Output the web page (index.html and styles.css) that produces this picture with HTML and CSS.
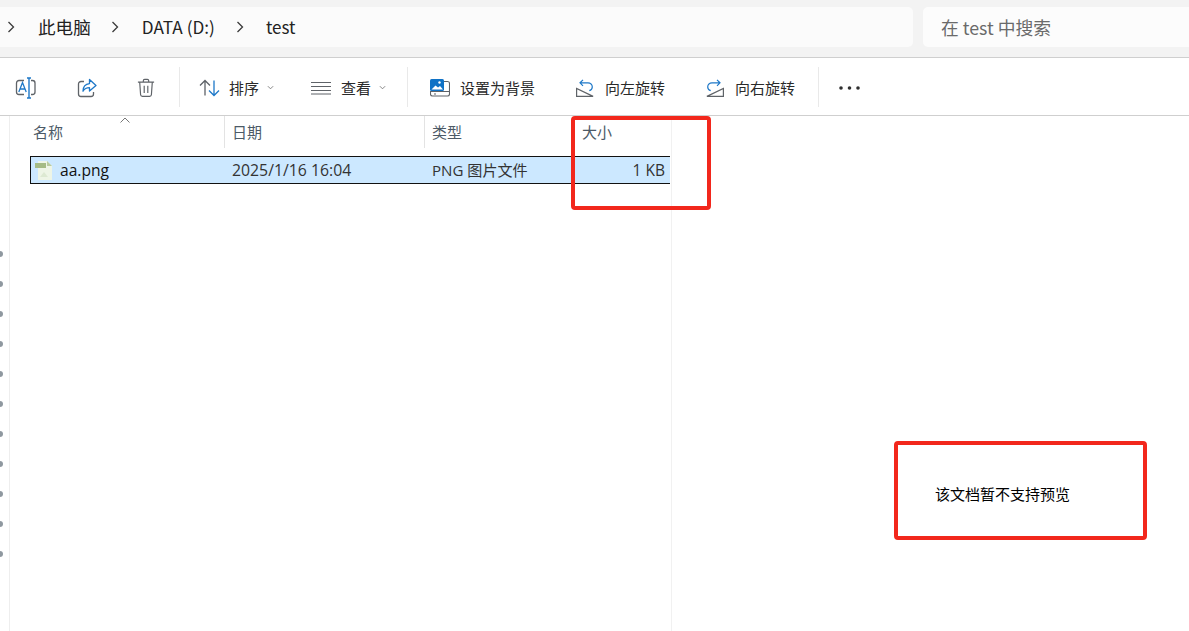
FILE: index.html
```html
<!DOCTYPE html>
<html lang="zh-CN">
<head>
<meta charset="utf-8">
<title>test</title>
<link rel="stylesheet" href="styles.css">
</head>
<body>
<div class="app">
  <header class="topbar">
    <nav class="address">
      <svg class="chev first" viewBox="0 0 8 12"><path d="M1.5 1l5 5-5 5"/></svg>
      <span class="crumb c1">此电脑</span>
      <svg class="chev" viewBox="0 0 8 12"><path d="M1.5 1l5 5-5 5"/></svg>
      <span class="crumb c2">DATA (D:)</span>
      <svg class="chev" viewBox="0 0 8 12"><path d="M1.5 1l5 5-5 5"/></svg>
      <span class="crumb c3">test</span>
    </nav>
    <div class="search">在 test 中搜索</div>
  </header>

  <div class="toolbar">
    <button class="tool icon-only i1">
      <svg width="22" height="22" viewBox="0 0 22 22" fill="none"><path d="M9 3.500H4a2.500 2.500 0 0 0-2.500 2.500v9A2.500 2.500 0 0 0 4 17.500h5M16 3.500h1.500A2.500 2.500 0 0 1 20 6v9a2.500 2.500 0 0 1-2.500 2.500H16" stroke="#5f6368" stroke-width="1.300"/><path d="M3.800 15L7.500 5.500l3.700 9.500M5 12h5" stroke="#1e78c8" stroke-width="1.300"/><path d="M12 1h4M14 1v20M12 21h4" stroke="#1e78c8" stroke-width="1.400"/></svg>
    </button>
    <button class="tool icon-only i2">
      <svg width="22" height="22" viewBox="0 0 22 22" fill="none"><path d="M8 4.500H5A2.500 2.500 0 0 0 2.500 7v10A2.500 2.500 0 0 0 5 19.500h10a2.500 2.500 0 0 0 2.500-2.500v-2" stroke="#5f6368" stroke-width="1.300"/><path d="M13.500 2.500l6.500 6-6.500 5.500v-3.300c-3 0-5 1-6.500 3.600 0-4.500 2.500-7.300 6.500-7.700z" stroke="#1e78c8" stroke-width="1.300" stroke-linejoin="round"/></svg>
    </button>
    <button class="tool icon-only i3">
      <svg width="18" height="22" viewBox="0 0 20 22" fill="none" stroke="#5f6368" stroke-width="1.300"><path d="M1 4.500h18M7 4.500V3a1.500 1.500 0 0 1 1.500-1.500h3A1.500 1.500 0 0 1 13 3v1.500M3 4.500l1 14a2 2 0 0 0 2 1.800h8a2 2 0 0 0 2-1.800l1-14M8 8.500v8M12 8.500v8"/></svg>
    </button>
    <span class="sep s1"></span>
    <button class="tool t-sort">
      <svg width="21" height="18" viewBox="0 0 21 18" fill="none" stroke-width="1.300"><path d="M1 6.500L6 1.500l5 5M6 1.500v15" stroke="#5f6368"/><path d="M10 11.500l5 5 5-5M15 16.500v-15" stroke="#1e78c8"/></svg>
      <span class="label">排序</span>
      <svg class="caret c-a" viewBox="0 0 8 5"><path d="M1 1l3 3 3-3"/></svg>
    </button>
    <button class="tool t-view">
      <svg width="20" height="14" viewBox="0 0 20 14" fill="none" stroke="#5f6368" stroke-width="1.200"><path d="M0 1.500h20M0 5.500h20M0 9.500h20M0 13h20"/></svg>
      <span class="label">查看</span>
      <svg class="caret c-b" viewBox="0 0 8 5"><path d="M1 1l3 3 3-3"/></svg>
    </button>
    <span class="sep s2"></span>
    <button class="tool t-bg">
      <svg width="20" height="18" viewBox="0 0 20 18" fill="none"><path d="M14 2.500h3.500a2 2 0 0 1 2 2V15a2 2 0 0 1-2 2h-15a2 2 0 0 1-2-2v-3" stroke="#5f6368" stroke-width="1.100"/><path d="M1 12.500h18.500M4 15h2" stroke="#5f6368" stroke-width="1.100"/><rect x="0" y="0" width="14" height="12" rx="1.500" fill="#0f72c6"/><path d="M1.500 10.500l4-4 2.500 2 2-1.500 3 3.500z" fill="#fff"/><circle cx="9.500" cy="3.500" r="1.200" fill="#fff"/></svg>
      <span class="label">设置为背景</span>
    </button>
    <button class="tool t-left">
      <svg width="18" height="18" viewBox="0 0 18 18" fill="none"><path d="M.6 17.400V9.500l16.500 7.900z" stroke="#5f6368" stroke-width="1.200"/><path d="M7 .8L4 3.800l3 3M4 3.800h8a4.300 4.300 0 0 1 4.300 4.200 4 4 0 0 1-3 3.700" stroke="#1e78c8" stroke-width="1.200"/></svg>
      <span class="label">向左旋转</span>
    </button>
    <button class="tool t-right">
      <svg width="18" height="18" viewBox="0 0 18 18" fill="none"><path d="M17.400 17.400V9.500L.9 17.400z" stroke="#5f6368" stroke-width="1.200"/><path d="M11 .8l3 3-3 3M14 3.800H6A4.300 4.300 0 0 0 1.700 8a4 4 0 0 0 3 3.700" stroke="#1e78c8" stroke-width="1.200"/></svg>
      <span class="label">向右旋转</span>
    </button>
    <span class="sep s3"></span>
    <button class="tool t-more">
      <svg width="21" height="4" viewBox="0 0 21 4" fill="#2f2f2f"><circle cx="2" cy="2" r="1.800"/><circle cx="10.500" cy="2" r="1.800"/><circle cx="19" cy="2" r="1.800"/></svg>
    </button>
  </div>

  <main class="body">
    <aside class="nav"></aside>
    <section class="list">
      <div class="cols">
        <div class="col h-name">名称</div>
        <div class="col h-date">日期</div>
        <div class="col h-type">类型</div>
        <div class="col h-size">大小</div>
        <svg class="sort" viewBox="0 0 10 6"><path d="M.5 5.500L5 1l4.500 4.500"/></svg>
      </div>
      <div class="row">
        <div class="cell f-name">
          <svg class="file" width="17" height="19" viewBox="0 0 17 19"><path d="M3 0h9l5 5v14H3z" fill="#eef5e6"/><path d="M12 0l5 5h-5z" fill="#b9cba0"/><rect x="0" y="2" width="11" height="5" fill="#a5bb85"/><path d="M5 16l4-5 4 5z" fill="#dde9d2"/></svg>
          <span>aa.png</span>
        </div>
        <div class="cell f-date">2025/1/16 16:04</div>
        <div class="cell f-type">PNG 图片文件</div>
        <div class="cell f-size">1 KB</div>
      </div>
    </section>
    <aside class="preview">
      <p class="msg">该文档暂不支持预览</p>
    </aside>
  </main>

  <div class="dots">
    <i></i><i></i><i></i><i></i><i></i><i></i><i></i><i></i><i></i><i></i><i></i>
  </div>
  <div class="mark m1"></div>
  <div class="mark m2"></div>
</div>
</body>
</html>
```

FILE: styles.css
```css
* { box-sizing: border-box; }
html, body { margin: 0; padding: 0; height: 100%; background: #fff; overflow: hidden; }
body { font-family: "Noto Sans CJK SC", "Open Sans", "Noto Sans", sans-serif; color: #1f1f1f; }
.app { position: relative; width: 1189px; height: 631px; display: flex; flex-direction: column; }

.topbar { height: 58px; flex: none; background: #f3f3f3; border-bottom: 1px solid #cfcfcf; padding: 7px 0 10px; display: flex; gap: 10px; }
.address { width: 913px; height: 40px; background: #fbfbfb; border-radius: 0 5px 5px 0; display: flex; align-items: center; padding-left: 7px; }
.search { flex: 1; height: 40px; background: #fcfcfc; border-radius: 5px 0 0 5px; padding-left: 18px; font: 17.800px/40px "Noto Sans CJK SC", "Open Sans", sans-serif; color: #6a6a6a; }
.chev { width: 8px; height: 12px; flex: none; fill: none; stroke: #3a3a3a; stroke-width: 1.300; }
.crumb { font: 17.600px/40px "Noto Sans CJK SC", "Open Sans", sans-serif; color: #222; white-space: nowrap; }
.c1 { margin: 0 20px 0 23px; }
.c2 { margin: 0 21px 0 23px; font-size: 17.200px; }
.c3 { margin-left: 22px; font-size: 17px; }

.toolbar { height: 58px; flex: none; background: #fff; border-bottom: 1px solid #cfcfcf; display: flex; align-items: center; position: relative; padding: 2px 0 0 15px; }
.tool { border: 0; background: none; padding: 0; display: flex; align-items: center; font: 15px/20px "Noto Sans CJK SC", sans-serif; color: #2a2a2a; flex: none; }
.tool svg { flex: none; display: block; }
.label { white-space: nowrap; }
.i1 { margin-right: 39px; }
.i2 { margin-right: 39px; }
.i3 { margin-right: 24px; }
.sep { width: 1px; height: 40px; background: #e9e9e9; flex: none; margin-top: -2px; }
.t-sort { margin-left: 19px; gap: 9px; }
.t-view { margin-left: 37px; gap: 10px; }
.caret { width: 7px; height: 5px; fill: none; stroke: #777; stroke-width: 1; }
.c-a { margin-left: -1px; }
.c-b { margin-left: -2px; }
.s2 { margin-left: 21px; }
.t-bg { margin-left: 22px; gap: 10px; }
.t-left { margin-left: 41px; gap: 11px; }
.t-right { margin-left: 41px; gap: 11px; }
.s3 { margin-left: 23px; }
.t-more { margin-left: 20px; }

.body { flex: 1; display: grid; grid-template-columns: 10px 662px 1fr; min-height: 0; }
.nav { border-right: 1px solid #eeeeee; }
.list { border-right: 1px solid #f1f1f1; position: relative; }
.cols { position: relative; height: 32px; display: grid; grid-template-columns: 214px 200px 150px 1fr; padding-left: 1px; }
.col { font: 15px/32px "Noto Sans CJK SC", sans-serif; color: #4c5a67; border-right: 1px solid #e3e3e3; padding-left: 7px; }
.h-name { padding-left: 22px; }
.h-type { border-right: 0; }
.h-size { border-right: 0; padding-left: 7px; }
.sort { position: absolute; left: 110px; top: 1px; width: 10px; height: 6px; fill: none; stroke: #777; stroke-width: 1; }
.row { margin: 8px 0 0 20px; width: 640px; height: 28px; background: #cce8ff; border: 1px solid #111; border-right: 0; display: grid; grid-template-columns: 194px 200px 150px 1fr; align-items: center; font: 15.500px/26px "Open Sans", "Noto Sans CJK SC", sans-serif; color: #222; }
.cell { white-space: nowrap; }
.f-name { display: flex; align-items: center; gap: 8px; padding-left: 4px; color: #111; font-size: 15.600px; }
.f-date { padding-left: 7px; color: #333; font-size: 15.800px; }
.f-type { padding-left: 7px; font-size: 15.100px; color: #333; }
.f-size { text-align: right; padding-right: 5px; color: #333; }

.preview { position: relative; background: #fff; }
.msg { margin: 0; padding: 368px 0 0 263px; font: 15px/20px "Noto Sans CJK SC", sans-serif; color: #000; }

.dots { position: absolute; left: -3px; top: 251px; display: flex; flex-direction: column; gap: 24px; }
.dots i { display: block; width: 6px; height: 6px; border-radius: 50%; background: #8f98a0; }
.mark { position: absolute; border: 4px solid #f2271c; border-radius: 4px; }
.m1 { left: 571px; top: 116px; width: 140px; height: 94px; }
.m2 { left: 894px; top: 441px; width: 253px; height: 99px; }
```
